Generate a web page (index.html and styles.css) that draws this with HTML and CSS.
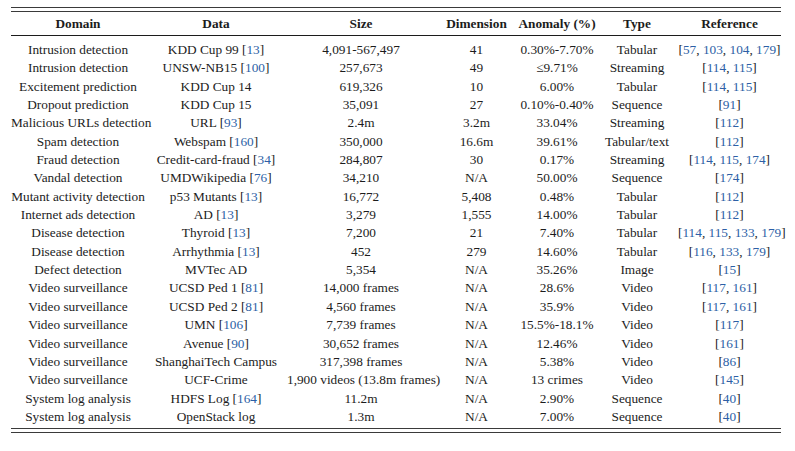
FILE: index.html
```html
<!DOCTYPE html>
<html lang="en">
<head>
<meta charset="utf-8">
<title>Anomaly detection datasets</title>
<link rel="stylesheet" href="styles.css">
</head>
<body>
<div class="frame">
<table class="data">
<colgroup>
<col class="c1"><col class="c2"><col class="c3"><col class="c4"><col class="c5"><col class="c6"><col class="c7">
</colgroup>
<thead>
<tr><th>Domain</th><th>Data</th><th>Size</th><th>Dimension</th><th>Anomaly (%)</th><th>Type</th><th>Reference</th></tr>
</thead>
<tbody>
<tr><td>Intrusion detection</td><td>KDD Cup 99 [<a>13</a>]</td><td>4,091-567,497</td><td>41</td><td>0.30%-7.70%</td><td>Tabular</td><td>[<a>57</a>, <a>103</a>, <a>104</a>, <a>179</a>]</td></tr>
<tr><td>Intrusion detection</td><td>UNSW-NB15 [<a>100</a>]</td><td>257,673</td><td>49</td><td>≤9.71%</td><td>Streaming</td><td>[<a>114</a>, <a>115</a>]</td></tr>
<tr><td>Excitement prediction</td><td>KDD Cup 14</td><td>619,326</td><td>10</td><td>6.00%</td><td>Tabular</td><td>[<a>114</a>, <a>115</a>]</td></tr>
<tr><td>Dropout prediction</td><td>KDD Cup 15</td><td>35,091</td><td>27</td><td>0.10%-0.40%</td><td>Sequence</td><td>[<a>91</a>]</td></tr>
<tr><td>Malicious URLs detection</td><td>URL [<a>93</a>]</td><td>2.4m</td><td>3.2m</td><td>33.04%</td><td>Streaming</td><td>[<a>112</a>]</td></tr>
<tr><td>Spam detection</td><td>Webspam [<a>160</a>]</td><td>350,000</td><td>16.6m</td><td>39.61%</td><td>Tabular/text</td><td>[<a>112</a>]</td></tr>
<tr><td>Fraud detection</td><td>Credit-card-fraud [<a>34</a>]</td><td>284,807</td><td>30</td><td>0.17%</td><td>Streaming</td><td>[<a>114</a>, <a>115</a>, <a>174</a>]</td></tr>
<tr><td>Vandal detection</td><td>UMDWikipedia [<a>76</a>]</td><td>34,210</td><td>N/A</td><td>50.00%</td><td>Sequence</td><td>[<a>174</a>]</td></tr>
<tr><td>Mutant activity detection</td><td>p53 Mutants [<a>13</a>]</td><td>16,772</td><td>5,408</td><td>0.48%</td><td>Tabular</td><td>[<a>112</a>]</td></tr>
<tr><td>Internet ads detection</td><td>AD [<a>13</a>]</td><td>3,279</td><td>1,555</td><td>14.00%</td><td>Tabular</td><td>[<a>112</a>]</td></tr>
<tr><td>Disease detection</td><td>Thyroid [<a>13</a>]</td><td>7,200</td><td>21</td><td>7.40%</td><td>Tabular</td><td>[<a>114</a>, <a>115</a>, <a>133</a>, <a>179</a>]</td></tr>
<tr><td>Disease detection</td><td>Arrhythmia [<a>13</a>]</td><td>452</td><td>279</td><td>14.60%</td><td>Tabular</td><td>[<a>116</a>, <a>133</a>, <a>179</a>]</td></tr>
<tr><td>Defect detection</td><td>MVTec AD</td><td>5,354</td><td>N/A</td><td>35.26%</td><td>Image</td><td>[<a>15</a>]</td></tr>
<tr><td>Video surveillance</td><td>UCSD Ped 1 [<a>81</a>]</td><td>14,000 frames</td><td>N/A</td><td>28.6%</td><td>Video</td><td>[<a>117</a>, <a>161</a>]</td></tr>
<tr><td>Video surveillance</td><td>UCSD Ped 2 [<a>81</a>]</td><td>4,560 frames</td><td>N/A</td><td>35.9%</td><td>Video</td><td>[<a>117</a>, <a>161</a>]</td></tr>
<tr><td>Video surveillance</td><td>UMN [<a>106</a>]</td><td>7,739 frames</td><td>N/A</td><td>15.5%-18.1%</td><td>Video</td><td>[<a>117</a>]</td></tr>
<tr><td>Video surveillance</td><td>Avenue [<a>90</a>]</td><td>30,652 frames</td><td>N/A</td><td>12.46%</td><td>Video</td><td>[<a>161</a>]</td></tr>
<tr><td>Video surveillance</td><td>ShanghaiTech Campus</td><td>317,398 frames</td><td>N/A</td><td>5.38%</td><td>Video</td><td>[<a>86</a>]</td></tr>
<tr><td>Video surveillance</td><td>UCF-Crime</td><td>1,900 videos (13.8m frames)</td><td>N/A</td><td>13 crimes</td><td>Video</td><td>[<a>145</a>]</td></tr>
<tr><td>System log analysis</td><td>HDFS Log [<a>164</a>]</td><td>11.2m</td><td>N/A</td><td>2.90%</td><td>Sequence</td><td>[<a>40</a>]</td></tr>
<tr><td>System log analysis</td><td>OpenStack log</td><td>1.3m</td><td>N/A</td><td>7.00%</td><td>Sequence</td><td>[<a>40</a>]</td></tr>
</tbody>
</table>
</div>
</body>
</html>
```

FILE: styles.css
```css
html, body {
  margin: 0;
  padding: 0;
  background: #ffffff;
}

body {
  font-family: "Liberation Serif", "DejaVu Serif", serif;
  font-size: 13.3px;
  color: #1c1c1c;
}

.frame {
  margin: 7px 0 0 11px;
  width: 770px;
  border-top: 1px solid #3a3a3a;
  border-bottom: 1px solid #3a3a3a;
  padding: 3px 0;
}

.data {
  width: 770px;
  table-layout: fixed;
  border-collapse: collapse;
  border-top: 1px solid #3a3a3a;
  border-bottom: 1px solid #3a3a3a;
}

.c1 { width: 134px; }
.c2 { width: 142px; }
.c3 { width: 148px; }
.c4 { width: 83px; }
.c5 { width: 78px; }
.c6 { width: 82px; }
.c7 { width: 103px; }

.data th,
.data td {
  padding: 0;
  text-align: center;
  white-space: nowrap;
}

.data th {
  font-weight: bold;
  height: 23px;
  line-height: 23px;
  border-bottom: 1px solid #1c1c1c;
}

.data td {
  height: 18.35px;
  line-height: 18.35px;
}

.data tbody tr:first-child td {
  padding-top: 5px;
}

.data tbody tr:last-child td {
  padding-bottom: 2px;
}

.data a {
  color: #2d5fa6;
  text-decoration: none;
}
```
